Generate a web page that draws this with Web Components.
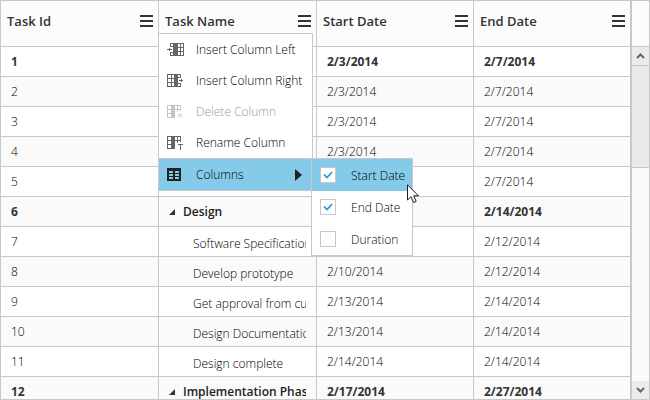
<!DOCTYPE html>
<html lang="en">
<head>
<meta charset="utf-8">
<title>Project tasks</title>
<style>
  body { margin: 0; font: 12px "Open Sans", "Noto Sans", sans-serif; color: #333; --line: #c8c8c8; --active: #86caea; }
</style>
</head>
<body>
<task-grid></task-grid>

<template id="glyph-left"><svg width="17" height="14" viewBox="0 0 17 14" shape-rendering="crispEdges" fill="none" stroke="currentColor"><path d="M3.5 3V.5H16.5V12.5H3.5V10M3 3.5H7M3 9.5H7M10 4.5H17M10 8.5H17M13.5 0V13"/><path d="M6 0H11V13H6Z" fill="currentColor" stroke="none"/><path d="M1 6.5H5M2.5 5V8M0 6.5H1" /></svg></template>
<template id="glyph-right"><svg width="17" height="14" viewBox="0 0 17 14" shape-rendering="crispEdges" fill="none" stroke="currentColor"><path d="M13.5 3V.5H.5V12.5H13.5V10M14 3.5H10M14 9.5H10M7 4.5H0M7 8.5H0M4.5 0V13"/><path d="M7 0H11V13H7Z" fill="currentColor" stroke="none"/><path d="M12 6.5H16M14.5 5V8" /></svg></template>
<template id="glyph-delete"><svg width="17" height="14" viewBox="0 0 17 14" fill="none" stroke="currentColor"><g shape-rendering="crispEdges"><path d="M4 .5H.5V12.5H4M0 4.5H4M0 8.5H4M8 .5H13.5V6M8 4.5H14M10.5 0V7"/><path d="M4 0H8V13H4Z" fill="currentColor" stroke="none"/></g><path d="M11 8.5L15 12.5M15 8.5L11 12.5"/></svg></template>
<template id="glyph-rename"><svg width="17" height="14" viewBox="0 0 17 14" shape-rendering="crispEdges" fill="none" stroke="currentColor"><path d="M4 .5H.5V12.5H4M0 4.5H4M0 8.5H4M8 .5H13.5V6M8 4.5H14M10.5 0V7M11 8.5H16M13.5 8V14"/><path d="M4 0H8V13H4Z" fill="currentColor" stroke="none"/></svg></template>
<template id="glyph-columns"><svg width="17" height="14" viewBox="0 0 17 14" shape-rendering="crispEdges"><path d="M0 0H14V13H0Z" fill="#222"/><path d="M2 3H6V5H2ZM8 3H12V5H8ZM2 6H6V8H2ZM8 6H12V8H8ZM2 9H6V11H2ZM8 9H12V11H8Z" fill="var(--active)"/></svg></template>

<script>
const shadow = (el, html) => { el.attachShadow({ mode: 'open' }).innerHTML = html; return el.shadowRoot; };

customElements.define('menu-glyph', class extends HTMLElement {
  connectedCallback() {
    if (this.shadowRoot) return;
    shadow(this, '<style>:host{display:block;width:17px;height:14px;color:#666}svg{display:block}</style>')
      .append(document.getElementById('glyph-' + this.getAttribute('name')).content.cloneNode(true));
  }
});

customElements.define('menu-entry', class extends HTMLElement {
  connectedCallback() {
    if (this.shadowRoot) return;
    const open = this.hasAttribute('open'), off = this.hasAttribute('disabled');
    shadow(this, `<style>
      :host{display:block;position:relative}
      :host([open]){border-top:1px solid var(--line);background:var(--active)}
      button{display:flex;align-items:center;gap:12px;width:100%;height:31px;padding:0 10px 0 8px;border:0;background:none;font:inherit;color:#000;text-align:left;white-space:nowrap}
      button:disabled{color:#999} button:disabled menu-glyph{color:#c4c4c4}
      .label{flex:1}
    </style>
    <button role="menuitem" ${off ? 'disabled' : ''} ${open ? 'aria-expanded="true"' : ''}>
      <menu-glyph name="${this.getAttribute('glyph')}"></menu-glyph><span class="label"><slot></slot></span>
      ${open ? '<svg width="7" height="12" viewBox="0 0 7 12"><path d="M0 0L7 6L0 12Z" fill="#222"/></svg>' : ''}
    </button><slot name="submenu"></slot>`);
  }
});

customElements.define('check-entry', class extends HTMLElement {
  connectedCallback() {
    if (this.shadowRoot) return;
    shadow(this, `<style>
      :host{display:block} :host([active]){background:var(--active)}
      label{display:flex;align-items:center;gap:15px;height:32px;padding:0 8px;white-space:nowrap}
      .box{display:grid;width:16px;height:16px}
      input,svg{grid-area:1/1}
      input{appearance:none;box-sizing:border-box;width:16px;height:16px;margin:0;border:1px solid var(--line);background:#fff}
      svg{visibility:hidden;pointer-events:none} input:checked+svg{visibility:visible}
    </style>
    <label><span class="box"><input type="checkbox" ${this.hasAttribute('checked') ? 'checked' : ''}>
    <svg width="16" height="16" viewBox="0 0 16 16"><path d="M4 7.5L7 10.5L12 5" fill="none" stroke="#2e95d3" stroke-width="1.7"/></svg></span><slot></slot></label>`);
  }
});

customElements.define('column-chooser', class extends HTMLElement {
  connectedCallback() {
    if (this.shadowRoot) return;
    shadow(this, `<style>
      :host{display:block;position:absolute;top:-1px;left:calc(100% - 1px);box-sizing:border-box;width:102px;border:1px solid var(--line);background:#fff}
      .pointer{position:absolute;left:95px;top:25px}
    </style>
    <check-entry checked active>Start Date</check-entry>
    <check-entry checked>End Date</check-entry>
    <check-entry>Duration</check-entry>
    <svg class="pointer" width="13" height="20" viewBox="0 0 13 20"><path d="M.5 .8V16L4 12.7L6.6 18.6L9.2 17.4L6.7 11.8H11.5Z" fill="#fff" stroke="#1c1c2c"/></svg>`);
  }
});

customElements.define('column-menu', class extends HTMLElement {
  connectedCallback() {
    if (this.shadowRoot) return;
    shadow(this, `<style>
      :host{display:block;position:absolute;z-index:2;top:32px;left:-1px;box-sizing:border-box;width:155px;border:1px solid var(--line);background:#fff;font-weight:300;font-size:12px;color:#000}
    </style>
    <menu-entry glyph="left">Insert Column Left</menu-entry>
    <menu-entry glyph="right">Insert Column Right</menu-entry>
    <menu-entry glyph="delete" disabled>Delete Column</menu-entry>
    <menu-entry glyph="rename">Rename Column</menu-entry>
    <menu-entry glyph="columns" open>Columns<column-chooser slot="submenu"></column-chooser></menu-entry>`);
  }
});

customElements.define('column-head', class extends HTMLElement {
  connectedCallback() {
    if (this.shadowRoot) return;
    shadow(this, `<style>
      :host{display:flex;align-items:center;justify-content:space-between;height:40px;padding:0 5px 5px 6px;font-size:13px;font-weight:600;color:#333}
      button{display:grid;padding:0;border:0;background:none}
    </style>
    <span><slot></slot></span>
    <button aria-label="Column menu"><svg width="13" height="12" viewBox="0 0 13 12" shape-rendering="crispEdges"><path d="M0 0H13V2H0ZM0 5H13V7H0ZM0 10H13V12H0Z" fill="#333"/></svg></button>`);
  }
});

customElements.define('scroll-rail', class extends HTMLElement {
  connectedCallback() {
    if (this.shadowRoot) return;
    shadow(this, `<style>
      :host{display:flex;flex-direction:column;border-left:2px solid var(--line);background:#fafafa}
      .head{height:45px;border-bottom:1px solid var(--line);background:#fcfcfc}
      button{display:grid;place-items:center;height:18px;padding:0;border:0;background:#ebebeb}
      .thumb{height:101px;border:solid var(--line);border-width:1px 0;background:#eaeaea}
      .track{flex:1}
      path{fill:none;stroke:#666;stroke-width:2}
    </style>
    <div class="head"></div>
    <button aria-label="Scroll up"><svg width="9" height="6" viewBox="0 0 9 6"><path d="M1 5L4.5 1.5L8 5"/></svg></button>
    <div class="thumb"></div><div class="track"></div>
    <button aria-label="Scroll down"><svg width="9" height="6" viewBox="0 0 9 6"><path d="M1 1L4.5 4.5L8 1"/></svg></button>`);
  }
});

customElements.define('task-grid', class extends HTMLElement {
  connectedCallback() {
    if (this.shadowRoot) return;
    const rows = [
      [1, '', '2/3/2014', '2/7/2014', 1], [2, '', '2/3/2014', '2/7/2014'], [3, '', '2/3/2014', '2/7/2014'],
      [4, '', '2/3/2014', '2/7/2014'], [5, '', '', '2/7/2014'], [6, 'Design', '', '2/14/2014', 1],
      [7, 'Software Specification', '', '2/12/2014'], [8, 'Develop prototype', '2/10/2014', '2/12/2014'],
      [9, 'Get approval from cus', '2/13/2014', '2/14/2014'], [10, 'Design Documentation', '2/13/2014', '2/14/2014'],
      [11, 'Design complete', '2/14/2014', '2/14/2014'], [12, 'Implementation Phase', '2/17/2014', '2/27/2014', 1]];
    const mark = '<svg width="6" height="6" viewBox="0 0 6 6"><path d="M6 0V6H0Z" fill="#333"/></svg>';
    const body = rows.map(([id, name, start, end, group]) => `<tr class="${group ? 'group' : ''}"><td>${id}</td>
      <td><div class="name">${name ? (group ? mark : '') + `<span>${name}</span>` : ''}</div></td><td>${start}</td><td>${end}</td></tr>`).join('');
    shadow(this, `<style>
      :host{display:grid;grid-template-columns:minmax(0,1fr) 19px;box-sizing:border-box;height:100vh;border:1px solid var(--line);overflow:hidden;background:#fff}
      .view{overflow:hidden;min-height:0}
      table{width:100%;table-layout:fixed;border-collapse:separate;border-spacing:0}
      .wide{width:25.12%} .mid{width:24.96%}
      th,td{box-sizing:border-box;padding:0;border:solid var(--line);border-width:0 1px 1px 0;text-align:left}
      th:last-child,td:last-child{border-right:0}
      th{position:relative;background:#fcfcfc}
      td{height:30px;padding:0 10px;line-height:18px;white-space:nowrap;overflow:hidden;font-weight:300;color:#000}
      tbody tr:nth-child(even){background:#fafafa}
      .group td{font-weight:700;color:#333}
      .name{display:flex;align-items:center;gap:8px;overflow:hidden;padding:4px 0 0 24px}
      .group .name{padding:0;font-weight:600;color:#222}
      .name svg{flex:none}
      .name span{min-width:0;overflow:hidden}
    </style>
    <div class="view"><table>
      <colgroup><col class="wide"><col class="wide"><col class="mid"><col></colgroup>
      <thead><tr><th><column-head>Task Id</column-head></th><th><column-head>Task Name</column-head><column-menu></column-menu></th>
      <th><column-head>Start Date</column-head></th><th><column-head>End Date</column-head></th></tr></thead>
      <tbody>${body}</tbody></table></div>
    <scroll-rail></scroll-rail>`);
  }
});
</script>
</body>
</html>
